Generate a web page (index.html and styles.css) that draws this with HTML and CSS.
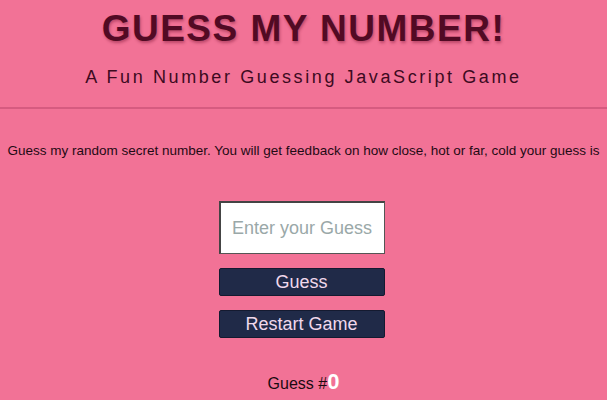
FILE: index.html
```html
<!DOCTYPE html>
<html>
<head>
<meta charset="utf-8">
<link rel="stylesheet" href="styles.css">
</head>
<body>
<header class="head">
  <h1 class="title">GUESS MY NUMBER!</h1>
  <h2 class="subtitle">A Fun Number Guessing JavaScript Game</h2>
</header>
<p class="intro">Guess my random secret number. You will get feedback on how close, hot or far, cold your guess is</p>
<div class="form">
  <input class="guess-input" type="text" placeholder="Enter your Guess">
  <button class="btn">Guess</button>
  <button class="btn">Restart Game</button>
</div>
<p class="count">Guess #<span class="num">0</span></p>
</body>
</html>
```
FILE: styles.css
```css
html, body {
  margin: 0;
  padding: 0;
  background: #f27296;
  font-family: "Liberation Sans", Arial, sans-serif;
  color: #2a0f1c;
}
.head {
  text-align: center;
  border-bottom: 2px solid #d65b80;
  height: 109px;
  box-sizing: border-box;
}
.title {
  margin: 0;
  padding-top: 9px;
  font-size: 37px;
  line-height: 40px;
  font-weight: bold;
  letter-spacing: 1.5px;
  color: #520a24;
  text-shadow: 1px 2px 3px rgba(120, 20, 50, 0.45);
}
.subtitle {
  margin: 17px 0 0;
  font-size: 18px;
  line-height: 22px;
  font-weight: normal;
  letter-spacing: 2.6px;
  color: #3d0a1f;
}
.intro {
  margin: 33px 0 0;
  text-align: center;
  font-size: 13.5px;
  line-height: 18px;
  color: #1f0a14;
}
.form {
  display: flex;
  flex-direction: column;
  align-items: center;
  margin-top: 41px;
  padding-right: 4px;
  gap: 14px;
}
.guess-input {
  width: 166px;
  height: 53px;
  box-sizing: border-box;
  border: 1px solid #555;
  border-top: 2px solid #444;
  border-left: 2px solid #444;
  background: #fff;
  font-family: "Liberation Sans", Arial, sans-serif;
  font-size: 18px;
  text-align: center;
  padding: 0;
  margin-bottom: 0;
}
.guess-input::placeholder {
  color: #9aa8a8;
}
.btn {
  width: 166px;
  height: 28px;
  box-sizing: border-box;
  border: 1px solid #141a30;
  border-radius: 2px;
  background: #202a48;
  color: #f0d8ec;
  font-family: "Liberation Sans", Arial, sans-serif;
  font-size: 18px;
  padding: 0;
}
.count {
  margin: 31px 0 0;
  text-align: center;
  font-size: 16px;
  color: #1a0a10;
}
.num {
  color: #fff;
  font-weight: bold;
  font-size: 22px;
}
```
